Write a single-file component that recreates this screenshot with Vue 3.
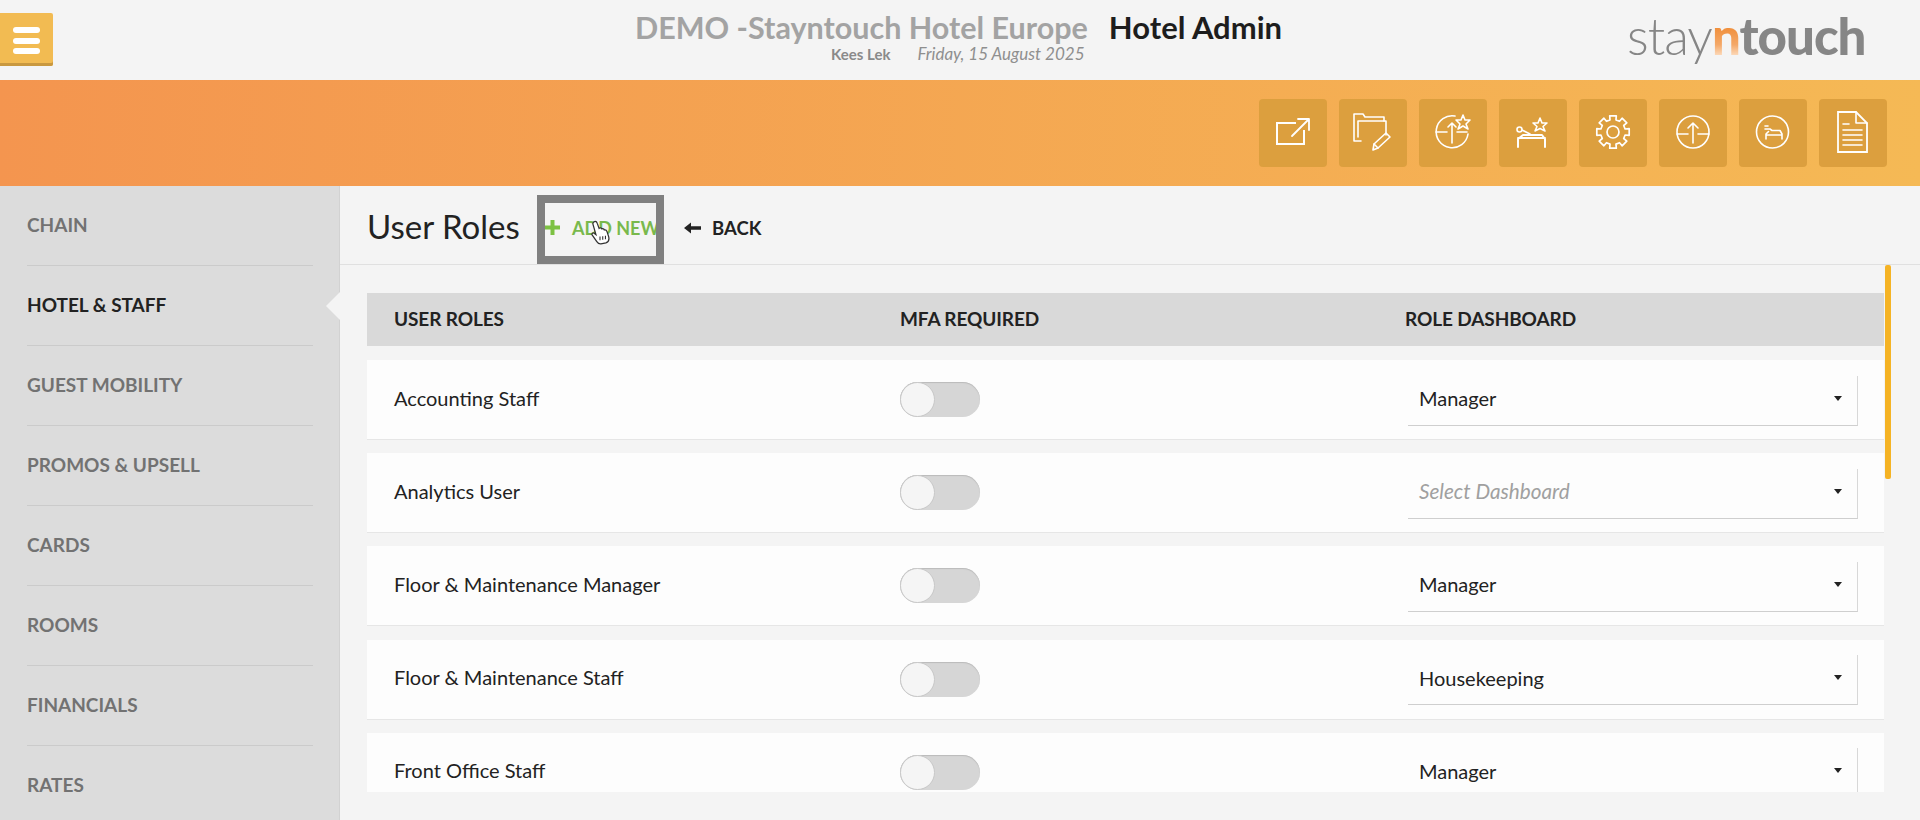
<script setup>
const navItems = [
  { label: 'CHAIN' },
  { label: 'HOTEL & STAFF', active: true },
  { label: 'GUEST MOBILITY' },
  { label: 'PROMOS & UPSELL' },
  { label: 'CARDS' },
  { label: 'ROOMS' },
  { label: 'FINANCIALS' },
  { label: 'RATES', last: true }
]
const roles = [
  { name: 'Accounting Staff', dash: 'Manager' },
  { name: 'Analytics User', dash: 'Select Dashboard', empty: true },
  { name: 'Floor & Maintenance Manager', dash: 'Manager' },
  { name: 'Floor & Maintenance Staff', dash: 'Housekeeping' },
  { name: 'Front Office Staff', dash: 'Manager' }
]
const tools = ['external', 'folder', 'upstar', 'bedstar', 'gear', 'up', 'bed', 'doc']
const gearPath = (() => {
  const cx = 34, cy = 33, teeth = 8, ro = 16.5, ri = 12.5
  let d = ''
  for (let i = 0; i < teeth; i++) {
    const a = (i / teeth) * Math.PI * 2 - Math.PI / 2
    const w = 0.2, g = 0.24
    const pts = [[ri, a - g], [ro, a - w], [ro, a + w], [ri, a + g]]
    pts.forEach(([r, t], j) => {
      const x = (cx + r * Math.cos(t)).toFixed(1)
      const y = (cy + r * Math.sin(t)).toFixed(1)
      d += (i === 0 && j === 0 ? 'M' : 'L') + x + ' ' + y + ' '
    })
  }
  return d + 'Z'
})()
</script>

<template>
  <div class="page">
    <header class="topbar">
      <button class="menu-btn" aria-label="Menu"><i></i><i></i><i></i></button>
      <div class="heading">
        <div class="heading-main">
          <span class="hotel-name">DEMO -Stayntouch Hotel Europe</span>
          <span class="app-name">Hotel Admin</span>
        </div>
        <div class="heading-sub">
          <span class="user">Kees Lek</span>
          <span class="date">Friday, 15 August 2025</span>
        </div>
      </div>
      <div class="logo"><span class="l-stay">stay</span><span class="l-n">n</span><span class="l-touch">touch</span></div>
    </header>

    <section class="banner">
      <button v-for="t in tools" :key="t" class="tool">
        <svg width="68" height="68" viewBox="0 0 68 68" fill="none" stroke="#fff" stroke-width="1.6" stroke-linejoin="round" stroke-linecap="round">
          <template v-if="t === 'external'">
            <path d="M37 24H18V45H45V31" stroke-width="2" stroke-linecap="butt" stroke-linejoin="miter" />
            <path d="M33 37L49 21M39 20H50V31" stroke-width="1.8" />
          </template>
          <template v-else-if="t === 'folder'">
            <path d="M22 42H15V15H24L26 18H45V22" />
            <path d="M19 38V22H47V36" />
            <path d="M34 51L35 45L47 34L51 38L39 49Z" />
            <path d="M35 45L39 49" />
          </template>
          <template v-else-if="t === 'upstar'">
            <path d="M36 17A16 16 0 1 0 49 35" />
            <path d="M17 33H28M38 33H48M33 44V24M29 28L33 24L37 28" />
            <path d="M44 16L46 21L51 21L47 25L49 30L44 27L39 30L41 25L37 21L42 21Z" />
          </template>
          <template v-else-if="t === 'bedstar'">
            <path d="M41 19L43 24L48 24L44 27.500L46 32L41 29.500L36 32L38 27.500L34 24L39 24Z" />
            <circle cx="20.500" cy="30.500" r="2.500" />
            <path d="M23 31L31 35" />
            <path d="M19 48V40L24 36H43L46 40V48M19 39H46" stroke-width="2" />
          </template>
          <template v-else-if="t === 'gear'">
            <path :d="gearPath" stroke-width="1.7" />
            <circle cx="34" cy="33" r="6" stroke-width="1.7" />
          </template>
          <template v-else-if="t === 'up'">
            <circle cx="34" cy="33" r="16" />
            <path d="M18 35H29M39 35H50M34 44V24M29 29L34 24L39 29" />
          </template>
          <template v-else-if="t === 'bed'">
            <circle cx="33.500" cy="33" r="16" />
            <path d="M26 27H29M26 30H31L33 31.500H41L43 35V40M27 40V35L29.500 32.500M28 36H43" />
          </template>
          <template v-else>
            <path d="M19 13H37L48 24V53H19Z" stroke-width="1.8" stroke-linejoin="miter" />
            <path d="M37 13V24H48" />
            <path d="M24 25H30M24 31H43M24 36H43M24 41H43M24 46H43" />
          </template>
        </svg>
      </button>
    </section>

    <div class="body">
      <nav class="sidebar">
        <a v-for="n in navItems" :key="n.label" class="nav-item" :class="{ active: n.active, last: n.last }">{{ n.label }}</a>
      </nav>

      <main class="content">
        <div class="title-row">
          <h1>User Roles</h1>
          <a class="add">
            <svg class="plus" width="15" height="15" viewBox="0 0 15 15"><path d="M5.500 0H9.500V5.500H15V9.500H9.500V15H5.500V9.500H0V5.500H5.500Z" fill="#7cc142" /></svg>
            <span>ADD NEW</span>
            <span class="focus-box"></span>
            <svg class="cursor" width="20" height="25" viewBox="0 0 22 27">
              <path d="M5 1.500C6.500 1 7.500 2 8 3.500L10 9C11 8 12.500 8.300 13 9.500C14 9 15.400 9.400 15.800 10.700C17 10.400 18.200 11 18.700 12.500L20.500 18C21.300 21 20 24 17.500 25L12 26C10 26.200 8.500 25 7.500 23.500L2.500 16.500C1.500 15 3 13.300 4.500 14.300L6.500 15.800L3.300 4.500C2.900 3 3.800 1.900 5 1.500Z" fill="#fff" stroke="#333" stroke-width="1.400" />
              <path d="M11 18V22M14 17.500V21.500M17 17V21" stroke="#333" stroke-width="1.200" />
            </svg>
          </a>
          <a class="back"><span class="arrow">
            <svg width="17" height="12" viewBox="0 0 17 12"><path d="M0 6L7 0.500V4.200H17V7.800H7V11.500Z" fill="#222" /></svg>
          </span>BACK</a>
        </div>

        <div class="table-wrap">
          <div class="scroll-thumb"></div>
          <div class="table">
            <div class="t-head">
              <span>USER ROLES</span>
              <span>MFA REQUIRED</span>
              <span>ROLE DASHBOARD</span>
            </div>
            <div v-for="r in roles" :key="r.name" class="t-row">
              <span class="role">{{ r.name }}</span>
              <span class="toggle"><i></i></span>
              <span class="select" :class="{ empty: r.empty }">
                <span>{{ r.dash }}</span>
                <i class="caret"></i>
              </span>
            </div>
          </div>
        </div>
      </main>
    </div>
  </div>
</template>

<style>
html, body { margin: 0; background: #f4f4f4; }
</style>

<style scoped>
.page {
  width: 1920px;
  height: 820px;
  overflow: hidden;
  display: flex;
  flex-direction: column;
  background: #f4f4f4;
  font-family: "Lato", "Open Sans", sans-serif;
  color: #222;
}
.topbar {
  height: 80px;
  flex: none;
  display: flex;
  position: relative;
  background: #f4f4f4;
}
.menu-btn {
  position: absolute;
  left: 0;
  top: 13px;
  width: 53px;
  height: 53px;
  padding: 14px 13px 0;
  border: 0;
  border-radius: 0 2px 2px 0;
  background: #f2bb52;
  box-shadow: inset 0 -3px 0 #c9983f;
  display: flex;
  flex-direction: column;
  gap: 4.500px;
}
.menu-btn i {
  display: block;
  width: 27px;
  height: 6px;
  border-radius: 3px;
  background: #fff;
}
.heading {
  position: absolute;
  left: 635px;
  top: 10px;
  width: 680px;
}
.heading-main {
  display: flex;
  align-items: baseline;
  gap: 21px;
  font-size: 30.500px;
  line-height: 34px;
  font-weight: 700;
}
.hotel-name { color: #a3a3a3; }
.app-name { color: #1d1d1d; font-size: 31px; }
.heading-sub {
  display: flex;
  gap: 27px;
  margin: 1px 0 0 196px;
  font-size: 15px;
  line-height: 18px;
}
.user { color: #8a8a8a; font-weight: 700; }
.date { color: #8f8f8f; font-style: italic; font-size: 17px; }
.logo {
  position: absolute;
  left: 1627px;
  top: 4px;
  font-size: 51px;
  line-height: 64px;
  letter-spacing: -1px;
  color: #868686;
  white-space: nowrap;
}
.l-stay { font-weight: 300; }
.l-n {
  font-weight: 900;
  background: linear-gradient(180deg, #ee8428 25%, #f4a868 65%, #fde0c5 85%);
  -webkit-background-clip: text;
  background-clip: text;
  color: transparent;
}
.l-touch { font-weight: 900; }

.banner {
  height: 106px;
  flex: none;
  box-sizing: border-box;
  display: flex;
  justify-content: flex-end;
  align-items: flex-start;
  gap: 12px;
  padding: 19px 33px 0 0;
  background: linear-gradient(92deg, #f4954f 0%, #f5b955 100%);
}
.tool {
  width: 68px;
  height: 68px;
  padding: 0;
  border: 0;
  border-radius: 4px;
  background: #dc9f3e;
}
.tool svg { display: block; }

.body {
  flex: 1;
  min-height: 0;
  display: flex;
}
.sidebar {
  width: 340px;
  flex: none;
  box-sizing: border-box;
  padding: 0 27px 0 27px;
  background: #dcdcdc;
  box-shadow: inset -1px 0 0 #d2d2d2;
}
.nav-item {
  display: flex;
  align-items: center;
  box-sizing: border-box;
  height: 80px;
  padding-bottom: 3px;
  border-bottom: 1px solid #cbcbcb;
  font-size: 19px;
  font-weight: 700;
  color: #727272;
  position: relative;
}
.nav-item.last { border-bottom: 0; }
.nav-item.active { color: #222; }
.nav-item.active::after {
  content: "";
  position: absolute;
  right: -27px;
  top: 26px;
  border: 14px solid transparent;
  border-left: 0;
  border-right-color: #f4f4f4;
}
.content {
  flex: 1;
  min-width: 0;
  display: flex;
  flex-direction: column;
}
.title-row {
  height: 79px;
  flex: none;
  box-sizing: border-box;
  border-bottom: 1px solid #e0e0e0;
  padding-left: 27px;
  display: flex;
  align-items: center;
}
h1 {
  margin: 1px 0 0;
  font-size: 33px;
  font-weight: 400;
  color: #222;
  width: 178px;
}
.add {
  position: relative;
  display: flex;
  align-items: center;
  gap: 12px;
  margin-top: 5px;
  font-size: 18px;
  font-weight: 700;
  color: #79b94c;
  width: 139px;
  white-space: nowrap;
}
.plus { flex: none; margin-top: -1px; }
.focus-box {
  position: absolute;
  left: -8px;
  top: -22px;
  width: 111px;
  height: 53px;
  border: 8px solid #808080;
}
.cursor { position: absolute; left: 45px; top: 3px; }
.back {
  display: flex;
  align-items: center;
  gap: 11px;
  margin-top: 5px;
  font-size: 18.500px;
  font-weight: 700;
  color: #222;
}
.arrow { display: flex; }
.table-wrap {
  flex: 1;
  min-height: 0;
  position: relative;
  padding: 28px 36px 0 27px;
}
.scroll-thumb {
  position: absolute;
  right: 29px;
  top: 0;
  width: 6px;
  height: 214px;
  border-radius: 2px;
  background: #f5b324;
}
.table {
  height: 499px;
  overflow: hidden;
}
.t-head, .t-row {
  display: grid;
  grid-template-columns: 506px 505px 1fr;
  padding-left: 27px;
  align-items: center;
}
.t-head {
  height: 53px;
  padding-bottom: 2px;
  box-sizing: border-box;
  background: #d9d9d9;
  font-size: 19px;
  letter-spacing: -0.100px;
  font-weight: 700;
  color: #222;
  margin-bottom: 14px;
}
.t-row {
  height: 80px;
  box-sizing: border-box;
  background: #fdfdfd;
  border-bottom: 1px solid #e6e6e6;
  margin-bottom: 13.200px;
  font-size: 20px;
  color: #222;
}
.role { padding-bottom: 4px; }
.toggle {
  display: block;
  width: 80px;
  height: 35px;
  box-sizing: border-box;
  border-radius: 18px;
  background: #d6d6d6;
  box-shadow: inset 0 1px 1px #bbb;
  position: relative;
}
.toggle i {
  position: absolute;
  left: 0;
  top: 0;
  width: 35px;
  height: 35px;
  box-sizing: border-box;
  border: 1.500px solid #c8c8c8;
  border-radius: 50%;
  background: #f5f5f5;
}
.select {
  margin: 2px 0 0 3px;
  width: 450px;
  height: 50px;
  box-sizing: border-box;
  padding: 0 15px 4px 11px;
  border-right: 1px solid #d8d8d8;
  border-bottom: 1px solid #cfcfcf;
  display: flex;
  align-items: center;
  justify-content: space-between;
}
.select.empty { color: #a0a0a0; font-style: italic; font-size: 20.700px; }
.caret {
  width: 0;
  height: 0;
  border: 4px solid transparent;
  border-top: 5px solid #222;
  border-bottom: 0;
}
</style>
